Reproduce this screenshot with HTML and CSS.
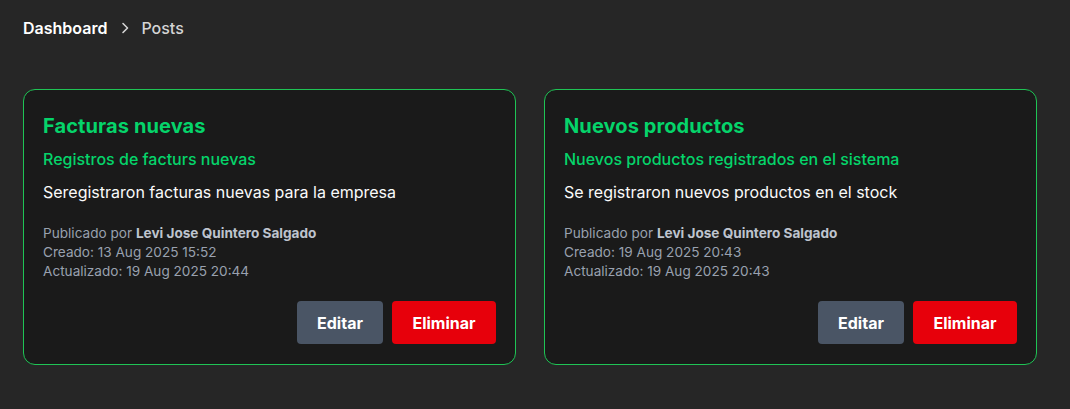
FILE: index.html
```html
<!DOCTYPE html>
<html lang="es">
<head>
<meta charset="utf-8">
<title>Posts</title>
<link rel="stylesheet" href="styles.css">
</head>
<body>
<div class="page">
  <nav class="breadcrumb">
    <span class="crumb-main">Dashboard</span>
    <svg class="chev" width="16" height="16" viewBox="0 0 16 16"><path d="M6 3.5 L10.5 8 L6 12.5" fill="none" stroke="#d4d4d4" stroke-width="1.6" stroke-linecap="round" stroke-linejoin="round"/></svg>
    <span class="crumb">Posts</span>
  </nav>
  <div class="grid">
    <div class="card">
      <h2 class="title">Facturas nuevas</h2>
      <h3 class="subtitle">Registros de facturs nuevas</h3>
      <p class="desc">Seregistraron facturas nuevas para la empresa</p>
      <div class="meta">
        <div>Publicado por <strong>Levi Jose Quintero Salgado</strong></div>
        <div>Creado: 13 Aug 2025 15:52</div>
        <div>Actualizado: 19 Aug 2025 20:44</div>
      </div>
      <div class="actions">
        <button class="btn btn-edit">Editar</button>
        <button class="btn btn-del">Eliminar</button>
      </div>
    </div>
    <div class="card">
      <h2 class="title">Nuevos productos</h2>
      <h3 class="subtitle">Nuevos productos registrados en el sistema</h3>
      <p class="desc">Se registraron nuevos productos en el stock</p>
      <div class="meta">
        <div>Publicado por <strong>Levi Jose Quintero Salgado</strong></div>
        <div>Creado: 19 Aug 2025 20:43</div>
        <div>Actualizado: 19 Aug 2025 20:43</div>
      </div>
      <div class="actions">
        <button class="btn btn-edit">Editar</button>
        <button class="btn btn-del">Eliminar</button>
      </div>
    </div>
  </div>
</div>
</body>
</html>
```
FILE: styles.css
```css
* { box-sizing: border-box; }
html, body { margin: 0; padding: 0; }
body {
  background: #262626;
  font-family: Inter, "Noto Sans", sans-serif;
  color: #fafafa;
  width: 1070px;
  height: 409px;
  overflow: hidden;
}
.page { padding: 17px 23px 0 23px; }
.breadcrumb {
  display: flex;
  align-items: center;
  height: 22px;
  font-size: 16px;
}
.crumb-main { color: #ffffff; font-weight: 600; }
.chev { margin: 0 8px 0 10px; }
.crumb { color: #d4d4d4; font-weight: 500; }
.grid {
  display: grid;
  grid-template-columns: 493px 493px;
  column-gap: 28px;
  margin-top: 50px;
}
.card {
  background: #1a1a1a;
  border: 1px solid #1fc455;
  border-radius: 12px;
  padding: 23px 19px 20px 19px;
  display: flex;
  flex-direction: column;
}
.title {
  margin: 0;
  font-size: 20px;
  line-height: 27px;
  font-weight: 700;
  color: #05d46a;
  letter-spacing: 0.1px;
}
.subtitle {
  margin: 7px 0 0 0;
  font-size: 16px;
  line-height: 24px;
  font-weight: 500;
  color: #05d46a;
}
.desc {
  margin: 9px 0 0 0;
  font-size: 16px;
  line-height: 24px;
  color: #fafafa;
}
.meta {
  margin-top: 20px;
  font-size: 13.6px;
  line-height: 19px;
  color: #99a1af;
}
.meta strong { color: #bec4ce; font-weight: 700; }
.actions {
  display: flex;
  justify-content: flex-end;
  gap: 9px;
  margin-top: 20px;
}
.btn {
  height: 43px;
  border: none;
  border-radius: 4px;
  font-family: inherit;
  font-size: 16px;
  font-weight: 700;
  color: #ffffff;
  padding: 0;
}
.btn-edit { background: #4a5565; width: 86px; }
.btn-del { background: #e7000b; width: 104px; }
```
